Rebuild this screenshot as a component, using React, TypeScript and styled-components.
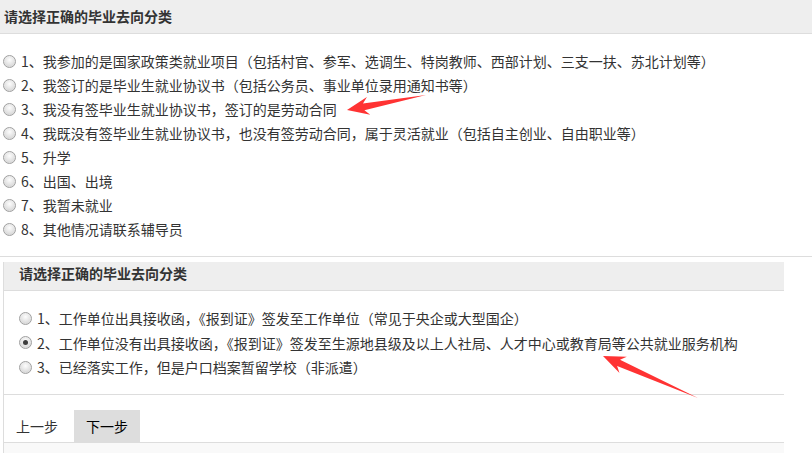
import styled, { createGlobalStyle } from "styled-components";

const GlobalStyle = createGlobalStyle`
  html, body {
    margin: 0;
    padding: 0;
    background: #fff;
  }
  body {
    font-family: "Microsoft YaHei", "Noto Sans CJK SC", "Noto Sans", sans-serif;
    font-size: 14px;
    color: #333;
  }
`;

const Page = styled.div`
  position: relative;
  width: 812px;
  height: 453px;
  overflow: hidden;
`;

// 위쪽 전체 폭 패널
const Panel = styled.section`
  border-bottom: 1px solid #ddd;
`;

const Header = styled.div`
  height: 33px;
  line-height: 32px;
  padding-left: 4px;
  background: #eee;
  border-bottom: 1px solid #ddd;
  font-weight: bold;
  font-size: 14px;
`;

const List = styled.div<{ $left: number; $top: number; $bottom: number; $row: number }>`
  display: flex;
  flex-direction: column;
  padding: ${(p) => p.$top}px 0 ${(p) => p.$bottom}px ${(p) => p.$left}px;
  & > label {
    height: ${(p) => p.$row}px;
  }
`;

const Option = styled.label`
  display: flex;
  align-items: center;
  gap: 5px;
  white-space: nowrap;
  line-height: 24px;
`;

// 옛날 스타일 라디오 버튼
const Radio = styled.span<{ $checked?: boolean }>`
  position: relative;
  flex: none;
  width: 11px;
  height: 11px;
  border-radius: 50%;
  border: 1px solid #a0a0a0;
  background: radial-gradient(circle at 50% 35%, #fdfdfd 0%, #e2e2e2 55%, #c8c8c8 100%);
  box-shadow: inset 0 0 1px #fff;
  &::after {
    content: "";
    display: ${(p) => (p.$checked ? "block" : "none")};
    position: absolute;
    left: 3px;
    top: 3px;
    width: 5px;
    height: 5px;
    border-radius: 50%;
    background: #3c3c3c;
  }
`;

// 아래쪽 패널 (왼쪽 테두리)
const Box = styled.section`
  margin: 5px 0 0 3px;
  width: 780px;
  border-left: 1px solid #ddd;
`;

const BoxHeader = styled.div`
  height: 28px;
  line-height: 22px;
  padding-left: 15px;
  background: #eee;
  border-bottom: 1px solid #ddd;
  font-weight: bold;
  font-size: 14px;
`;

const Footer = styled.div`
  display: flex;
  gap: 4px;
  padding-top: 15px;
  border-top: 1px solid #ddd;
  border-bottom: 1px solid #ddd;
`;

const Button = styled.button<{ $active?: boolean }>`
  height: 32px;
  padding: 0 12px;
  border: none;
  font-family: inherit;
  font-size: 14px;
  color: ${(p) => (p.$active ? "#000" : "#333")};
  background: ${(p) => (p.$active ? "#ddd" : "transparent")};
  cursor: pointer;
`;

const Bottom = styled.div`
  height: 10px;
  background: #f9f9f9;
`;

const Overlay = styled.svg`
  position: absolute;
  left: 0;
  top: 0;
  pointer-events: none;
`;

const options = [
  "1、我参加的是国家政策类就业项目（包括村官、参军、选调生、特岗教师、西部计划、三支一扶、苏北计划等）",
  "2、我签订的是毕业生就业协议书（包括公务员、事业单位录用通知书等）",
  "3、我没有签毕业生就业协议书，签订的是劳动合同",
  "4、我既没有签毕业生就业协议书，也没有签劳动合同，属于灵活就业（包括自主创业、自由职业等）",
  "5、升学",
  "6、出国、出境",
  "7、我暂未就业",
  "8、其他情况请联系辅导员",
];

const subOptions = [
  "1、工作单位出具接收函，《报到证》签发至工作单位（常见于央企或大型国企）",
  "2、工作单位没有出具接收函，《报到证》签发至生源地县级及以上人社局、人才中心或教育局等公共就业服务机构",
  "3、已经落实工作，但是户口档案暂留学校（非派遣）",
];

// 빨간 화살표: 끝점(tip)에서 꼬리(tail)까지
const arrow = (tx: number, ty: number, ex: number, ey: number) => {
  const dx = ex - tx;
  const dy = ey - ty;
  const len = Math.hypot(dx, dy);
  const ux = dx / len;
  const uy = dy / len;
  const nx = -uy;
  const ny = ux;
  const head = 22;
  const half = 9;
  const neck = 3.5;
  const bx = tx + ux * head;
  const by = ty + uy * head;
  const nbx = tx + ux * (head - 5);
  const nby = ty + uy * (head - 5);
  const pts = [
    [tx, ty],
    [bx + nx * half, by + ny * half],
    [nbx + nx * neck, nby + ny * neck],
    [ex, ey],
    [nbx - nx * neck, nby - ny * neck],
    [bx - nx * half, by - ny * half],
  ];
  return pts.map((p) => p.map((v) => v.toFixed(1)).join(",")).join(" ");
};

export default function App() {
  return (
    <>
      <GlobalStyle />
      <Page>
        <Panel>
          <Header>请选择正确的毕业去向分类</Header>
          <List $left={3} $top={15} $bottom={15} $row={24}>
            {options.map((o) => (
              <Option key={o}>
                <Radio />
                {o}
              </Option>
            ))}
          </List>
        </Panel>
        <Box>
          <BoxHeader>请选择正确的毕业去向分类</BoxHeader>
          <List $left={15} $top={15} $bottom={14} $row={24.5}>
            {subOptions.map((o, i) => (
              <Option key={o}>
                <Radio $checked={i === 1} />
                {o}
              </Option>
            ))}
          </List>
          <Footer>
            <Button>上一步</Button>
            <Button $active>下一步</Button>
          </Footer>
          <Bottom />
        </Box>
        <Overlay width="812" height="453">
          <polygon points={arrow(347, 110, 426, 95)} fill="#f33" />
          <polygon points={arrow(603, 356, 698, 398)} fill="#f33" />
        </Overlay>
      </Page>
    </>
  );
}
